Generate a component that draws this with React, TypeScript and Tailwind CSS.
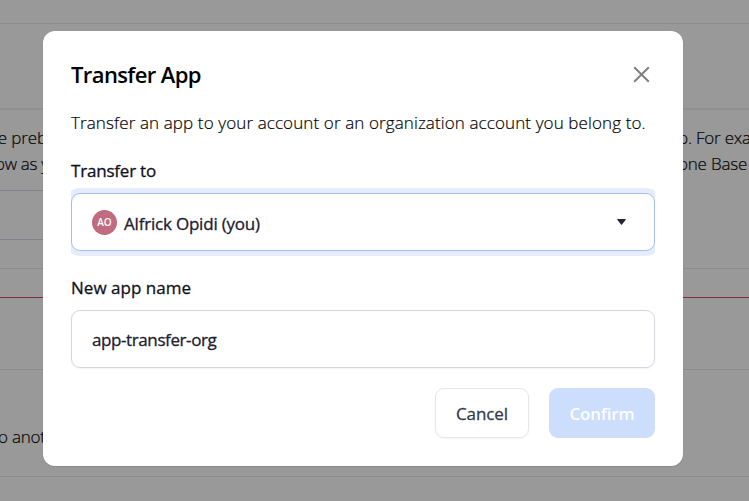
const light = 'whitespace-pre text-[17px] font-light leading-[26px] text-[#050505] [-webkit-text-stroke:0.2px_currentColor]';
const medium = 'whitespace-pre text-[17px] font-medium [-webkit-text-stroke:0.3px_currentColor]';

function Backdrop() {
  return (
    <div className="h-[501px] w-[749px] overflow-hidden bg-[#999999]">
      <div className="h-6 border-b border-[#8c8c8c]" />
      <div className="h-[86px] border-b-2 border-[#8f8f8f]" />
      <div className="h-[159px] border-b border-[#8b8c8d] pt-[15px]">
        <div className={`${light} flex h-[26px]`}>
          <span className="-ml-[6px] w-[684px] shrink-0 tracking-[-0.1px]">le preb</span>
          <span className="shrink-0 tracking-[-0.2px]">p. For exa</span>
        </div>
        <div className={`${light} flex h-[26px]`}>
          <span className="-ml-[5px] w-[683px] shrink-0 tracking-[-0.3px]">ow as y</span>
          <span className="shrink-0 tracking-[-0.2px]">one Base</span>
        </div>
        <div className="mt-[13px] h-[50px] w-[400px] border-y border-[#7f8389]" />
      </div>
      <div className="h-[29px] border-b border-[#7c2f3b]" />
      <div className="h-[72px] border-b border-[#8b8b8b]" />
      <div className="h-[107px] border-b border-[#8b8b8b] pt-[54px]">
        <span className={`${light} -ml-[2px] block tracking-[-0.25px]`}>o anot</span>
      </div>
    </div>
  );
}

function Modal() {
  return (
    <div className="absolute left-[43px] top-[30.5px] flex h-[435px] w-[640px] flex-col rounded-xl bg-white px-7 shadow-[0_1px_1px_rgba(0,0,0,0.1)]">
      <div className="mt-[28.5px] flex h-[30px] items-center justify-between">
        <h2 className="whitespace-pre text-[22px] font-semibold leading-[30px] tracking-[-0.6px] text-black">Transfer App</h2>
        <svg className="mr-[5px]" width="17" height="17" viewBox="0 0 17 17" fill="none" stroke="#808080" strokeWidth="2">
          <path d="M1.2 1.2l14.6 14.6M15.8 1.2L1.2 15.8" />
        </svg>
      </div>
      <p className={`${light} mt-[21px] tracking-[0.11px]`}>
        Transfer an app to your account or an organization account you belong to.
      </p>
      <label className={`${medium} mt-[23px] leading-6 tracking-[-0.2px] text-[#10111c]`}>Transfer to</label>
      <div className="mt-[5px] h-[68px] w-[584px] overflow-hidden py-[5px]">
        <div className="flex h-[58px] items-center rounded-[9px] border border-[#a4bdf6] bg-white pl-5 pr-7 shadow-[0_0_0_5px_#e5edfc]">
          <span className="flex size-[25px] items-center justify-center rounded-full bg-[#c16b7f] pt-px text-[10px] font-semibold text-white">AO</span>
          <span className={`${medium} ml-[7px] mt-[3px] tracking-[-0.2px] text-[#20202f]`}>Alfrick Opidi (you)</span>
          <svg className="ml-auto" width="9" height="6" viewBox="0 0 9 6" fill="#252334">
            <path d="M.8 0h7.4q1 0 .5.8L5 5.5q-.5.6-1 0L.3.8Q-.2 0 .8 0z" />
          </svg>
        </div>
      </div>
      <label className={`${medium} mt-5 leading-6 tracking-[0.02px] text-[#10111c]`}>New app name</label>
      <div className={`${medium} mt-[9.5px] flex h-[58px] w-[584px] shrink-0 items-center rounded-[9px] border border-[#d5d7df] pl-5 pt-[2px] tracking-[-0.4px] text-[#20202f] shadow-[0_1px_2px_rgba(0,0,0,0.05)]`}>
        app-transfer-org
      </div>
      <div className="mt-5 flex justify-end gap-5">
        <button className={`${medium} h-[50px] w-[94px] rounded-[9px] border border-[#e5e7eb] pt-[2px] tracking-[-0.1px] text-[#343a4b] shadow-[0_1px_2px_rgba(0,0,0,0.05)]`}>Cancel</button>
        <button className="h-[50px] w-[106px] rounded-[9px] bg-[#cdddfc] pt-[2px] text-[17px] font-semibold tracking-[-0.2px] text-[#fafcff]">Confirm</button>
      </div>
    </div>
  );
}

export default function App() {
  return (
    <div className="relative h-[501px] w-[749px] overflow-hidden font-['Open_Sans','Noto_Sans',sans-serif]">
      <Backdrop />
      <Modal />
    </div>
  );
}
